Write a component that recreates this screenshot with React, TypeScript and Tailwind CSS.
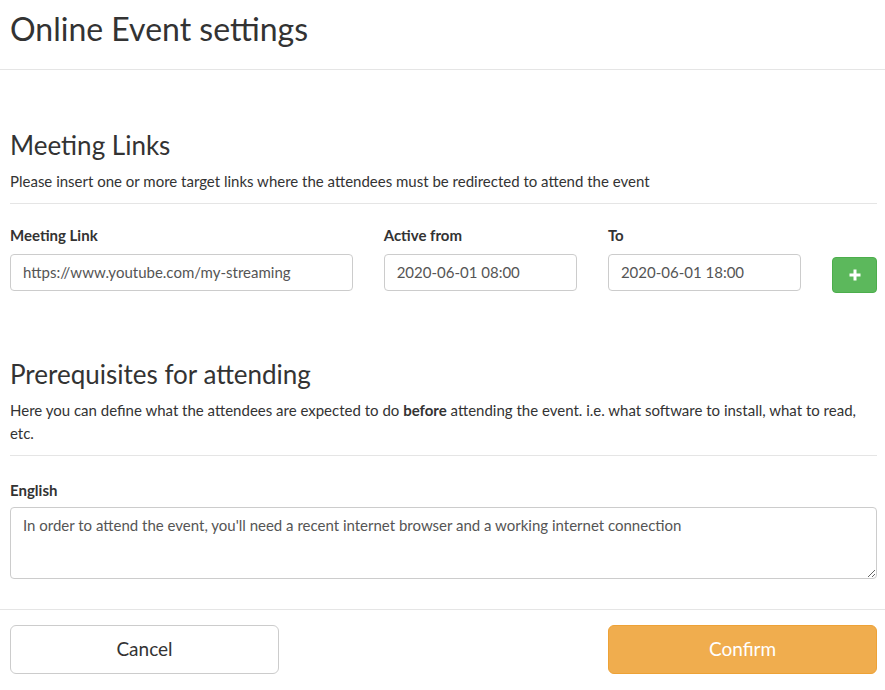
const font = { fontFamily: 'Lato, "Liberation Sans", sans-serif' };

function Field({ label, value, className = '' }: { label: string; value: string; className?: string }) {
  return (
    <div className={`flex flex-col ${className}`}>
      <label className="text-[15px] font-bold text-[#333] leading-[21px] mb-[8px]">{label}</label>
      <div className="h-[37px] border border-[#ccc] rounded-[4px] px-[12px] flex items-center text-[15px] text-[#555]">
        {value}
      </div>
    </div>
  );
}

export default function App() {
  return (
    <div className="w-[885px] h-[690px] bg-white text-[#333] overflow-hidden" style={font}>
      <div className="h-[70px] border-b border-[#e5e5e5] px-[10px] flex items-center">
        <h1 className="text-[32px] leading-[36px] mb-[12px]">Online Event settings</h1>
      </div>

      <div className="px-[10px] pr-[8px]">
        <h2 className="text-[26px] leading-[30px] mt-[60px]">Meeting Links</h2>
        <p className="text-[15px] leading-[22px] mt-[10px]">
          Please insert one or more target links where the attendees must be redirected to attend the event
        </p>
        <div className="border-t border-[#e5e5e5] mt-[11px]" />

        <div className="flex items-end mt-[21px] gap-[31px]">
          <Field label="Meeting Link" value="https://www.youtube.com/my-streaming" className="w-[344px]" />
          <Field label="Active from" value="2020-06-01 08:00" className="w-[194px]" />
          <Field label="To" value="2020-06-01 18:00" className="w-[194px]" />
          <button className="w-[45px] h-[36px] mb-[-2px] rounded-[4px] bg-[#5cb85c] border border-[#4cae4c] flex items-center justify-center">
            <svg width="12" height="12" viewBox="0 0 12 12">
              <path d="M6 0.5v11M0.5 6h11" stroke="white" strokeWidth="3" />
            </svg>
          </button>
        </div>

        <h2 className="text-[26px] leading-[30px] mt-[68px]">Prerequisites for attending</h2>
        <p className="text-[15px] leading-[23px] mt-[10px]">
          Here you can define what the attendees are expected to do <b>before</b> attending the event. i.e. what software to install, what to read, etc.
        </p>
        <div className="border-t border-[#e5e5e5] mt-[10px]" />

        <label className="block text-[15px] font-bold leading-[21px] mt-[24px]">English</label>
        <textarea
          className="block w-full h-[72px] mt-[6px] border border-[#ccc] rounded-[4px] px-[12px] py-[6px] text-[15px] text-[#555] outline-none"
          style={font}
          defaultValue="In order to attend the event, you'll need a recent internet browser and a working internet connection"
        />
      </div>

      <div className="border-t border-[#e5e5e5] mt-[30px] px-[10px] pr-[8px] pt-[15px] flex justify-between">
        <button className="w-[269px] h-[49px] border border-[#ccc] rounded-[6px] text-[19px] text-[#333] bg-white">Cancel</button>
        <button className="w-[269px] h-[49px] border border-[#eea236] rounded-[6px] text-[19px] text-white bg-[#f0ad4e]">Confirm</button>
      </div>
    </div>
  );
}
